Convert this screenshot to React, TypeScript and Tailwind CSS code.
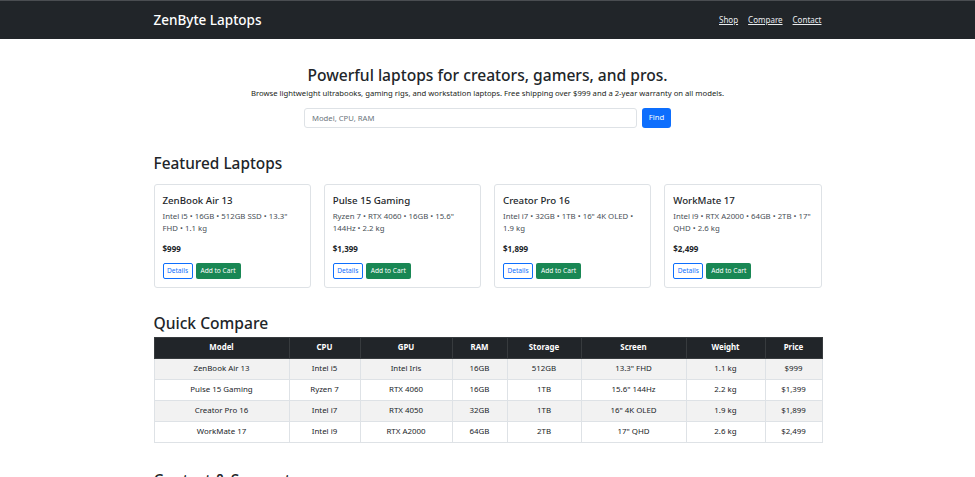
import React from "react";

const laptops = [
  { name: "ZenBook Air 13", specs: "Intel i5 • 16GB • 512GB SSD • 13.3\" FHD • 1.1 kg", price: "$999" },
  { name: "Pulse 15 Gaming", specs: "Ryzen 7 • RTX 4060 • 16GB • 15.6\" 144Hz • 2.2 kg", price: "$1,399" },
  { name: "Creator Pro 16", specs: "Intel i7 • 32GB • 1TB • 16\" 4K OLED • 1.9 kg", price: "$1,899" },
  { name: "WorkMate 17", specs: "Intel i9 • RTX A2000 • 64GB • 2TB • 17\" QHD • 2.6 kg", price: "$2,499" },
];

const columns = [
  { label: "Model", w: "w-[135px]" },
  { label: "CPU", w: "w-[71px]" },
  { label: "GPU", w: "w-[92px]" },
  { label: "RAM", w: "w-[55px]" },
  { label: "Storage", w: "w-[74px]" },
  { label: "Screen", w: "w-[105px]" },
  { label: "Weight", w: "w-[79px]" },
  { label: "Price", w: "w-[57px]" },
];

const rows = [
  ["ZenBook Air 13", "Intel i5", "Intel Iris", "16GB", "512GB", "13.3\" FHD", "1.1 kg", "$999"],
  ["Pulse 15 Gaming", "Ryzen 7", "RTX 4060", "16GB", "1TB", "15.6\" 144Hz", "2.2 kg", "$1,399"],
  ["Creator Pro 16", "Intel i7", "RTX 4050", "32GB", "1TB", "16\" 4K OLED", "1.9 kg", "$1,899"],
  ["WorkMate 17", "Intel i9", "RTX A2000", "64GB", "2TB", "17\" QHD", "2.6 kg", "$2,499"],
];

export default function App() {
  return (
    <div className="min-h-screen bg-white text-[#212529]" style={{ fontFamily: "'Noto Sans', 'Open Sans', sans-serif" }}>
      {/* Navbar */}
      <nav className="bg-[#212529] h-[39px] border-t border-[#4a4d51]">
        <div className="w-[668px] mx-auto h-full flex items-center justify-between">
          <a className="text-white text-[13.5px] font-medium">ZenByte Laptops</a>
          <div className="flex gap-[10px] text-[8px] text-[#e9ecef]">
            <a className="underline">Shop</a>
            <a className="underline">Compare</a>
            <a className="underline">Contact</a>
          </div>
        </div>
      </nav>

      <main className="w-[668px] mx-auto">
        {/* Hero */}
        <section className="text-center pt-[24px]">
          <h1 className="text-[15.6px] font-medium leading-[24px]">Powerful laptops for creators, gamers, and pros.</h1>
          <p className="text-[7.7px] leading-[12px] text-[#1a1d20]">
            Browse lightweight ultrabooks, gaming rigs, and workstation laptops. Free shipping over $999 and a 2-year warranty on all models.
          </p>
          <form className="flex justify-center gap-[5px] mt-[9px]" onSubmit={(e) => e.preventDefault()}>
            <input
              placeholder="Model, CPU, RAM"
              className="w-[333px] h-[20px] border border-[#dee2e6] rounded-[3px] px-[7px] text-[7.7px] placeholder:text-[#6c757d] outline-none"
            />
            <button className="h-[20px] w-[29px] bg-[#0d6efd] text-white text-[7.7px] rounded-[3px]">Find</button>
          </form>
        </section>

        {/* Featured */}
        <section className="mt-[25px]">
          <h2 className="text-[15.4px] font-medium leading-[22px]">Featured Laptops</h2>
          <div className="grid grid-cols-4 gap-[13px] mt-[9px]">
            {laptops.map((l) => (
              <div key={l.name} className="border border-[#dee2e6] rounded-[3px] h-[104px] px-[8px] pt-[9px]">
                <h5 className="text-[9.7px] font-medium leading-[14px]">{l.name}</h5>
                <p className="text-[7.8px] leading-[12px] text-[#495057] mt-[2px] h-[24px]">{l.specs}</p>
                <p className="text-[8px] font-bold leading-[12px] mt-[9px]">{l.price}</p>
                <div className="flex gap-[3px] mt-[8px]">
                  <button className="h-[16px] w-[30px] border border-[#0d6efd] text-[#0d6efd] text-[6.6px] rounded-[2px]">Details</button>
                  <button className="h-[16px] w-[45px] bg-[#198754] text-white text-[6.6px] rounded-[2px]">Add to Cart</button>
                </div>
              </div>
            ))}
          </div>
        </section>

        {/* Compare */}
        <section className="mt-[24px]">
          <h2 className="text-[15.6px] font-medium leading-[22px]">Quick Compare</h2>
          <table className="mt-[3px] w-[668px] border-collapse text-[7.9px] text-center table-fixed">
            <thead>
              <tr className="bg-[#212529] text-white h-[21px]">
                {columns.map((c) => (
                  <th key={c.label} className={`${c.w} font-bold border border-[#373b3e]`}>{c.label}</th>
                ))}
              </tr>
            </thead>
            <tbody>
              {rows.map((r, i) => (
                <tr key={r[0]} className={i % 2 === 0 ? "bg-[#f2f2f2] h-[21px]" : "bg-white h-[21px]"}>
                  {r.map((cell, j) => (
                    <td key={j} className="border border-[#dee2e6]">{cell}</td>
                  ))}
                </tr>
              ))}
            </tbody>
          </table>
        </section>

        {/* Contact */}
        <section className="mt-[26px]">
          <h2 className="text-[15.6px] font-medium leading-[22px]">Contact &amp; Support</h2>
        </section>
      </main>
    </div>
  );
}
